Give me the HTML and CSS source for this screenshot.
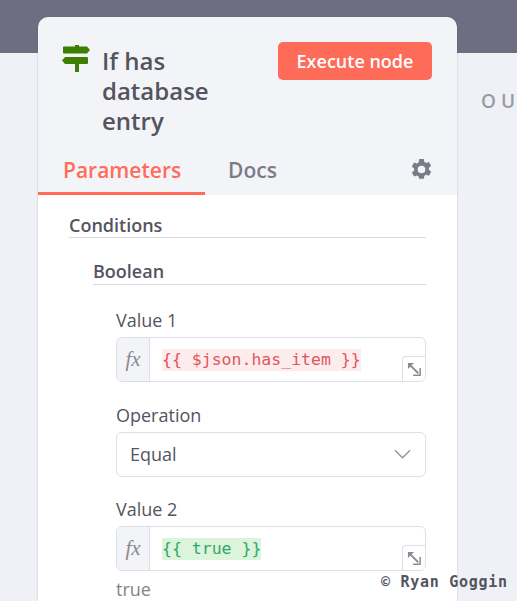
FILE: index.html
```html
<!DOCTYPE html>
<html lang="en">
<head>
<meta charset="utf-8">
<title>If has database entry</title>
<link rel="stylesheet" href="styles.css">
</head>
<body>
<div class="topbar"></div>
<div class="output-label">OU</div>
<section class="panel">
  <header class="head">
    <div class="title-group">
      <svg class="node-icon" viewBox="0 0 28 28" aria-hidden="true">
        <path fill="#3d7f00" d="M13 0h4v1.500h7.500a1 1 0 0 1 .7.3L28 5l-2.800 3.200a1 1 0 0 1-.7.300H2a1 1 0 0 1-1-1v-5a1 1 0 0 1 1-1h11zM3.500 12H25a1 1 0 0 1 1 1v5a1 1 0 0 1-1 1h-8v8h-4v-8H3.500a1 1 0 0 1-.7-.3L0 15.500l2.800-3.200a1 1 0 0 1 .7-.3z"/>
      </svg>
      <h1 class="title">If has database entry</h1>
    </div>
    <button class="execute">Execute node</button>
  </header>
  <nav class="tabs">
    <div class="tab tab-active">Parameters</div>
    <div class="tab tab-docs">Docs</div>
    <svg class="gear" viewBox="0 0 24 24" aria-hidden="true">
      <path fill="#7b7b88" fill-rule="evenodd" d="M9.600 1h4.800l.6 3.100 1.700 1 3-1 2.400 4.100-2.400 2.100v2l2.400 2.100-2.400 4.100-3-1-1.700 1-.6 3.100H9.600L9 19.200l-1.700-1-3 1-2.400-4.100 2.400-2.100v-2L1.900 8.900l2.400-4.100 3 1 1.700-1zM12 8a4 4 0 1 0 0 8 4 4 0 0 0 0-8z"/>
    </svg>
  </nav>
  <div class="body">
    <div class="section-title">Conditions</div>
    <div class="sub-section">
      <div class="section-title section-title-sub">Boolean</div>
      <div class="fields">
        <div class="field">
          <div class="label">Value 1</div>
          <div class="expr">
            <div class="fx">fx</div>
            <div class="expr-value"><span class="code code-red">{{ $json.has_item }}</span></div>
            <div class="expand">
              <svg viewBox="0 0 16 16" aria-hidden="true"><path fill="#8a8a94" d="M1 1h6.500L1 7.500z"/><path fill="none" stroke="#8a8a94" stroke-width="2" d="M3 3l9 9"/><path fill="none" stroke="#8a8a94" stroke-width="1.600" d="M14 6.500V14H6.500"/></svg>
            </div>
          </div>
        </div>
        <div class="field">
          <div class="label">Operation</div>
          <div class="select">
            <span>Equal</span>
            <svg class="chev" viewBox="0 0 18 10" aria-hidden="true"><path fill="none" stroke="#8f8f9a" stroke-width="1.300" d="M1 1l8 8 8-8"/></svg>
          </div>
        </div>
        <div class="field">
          <div class="label">Value 2</div>
          <div class="expr">
            <div class="fx">fx</div>
            <div class="expr-value"><span class="code code-green">{{ true }}</span></div>
            <div class="expand">
              <svg viewBox="0 0 16 16" aria-hidden="true"><path fill="#8a8a94" d="M1 1h6.500L1 7.500z"/><path fill="none" stroke="#8a8a94" stroke-width="2" d="M3 3l9 9"/><path fill="none" stroke="#8a8a94" stroke-width="1.600" d="M14 6.500V14H6.500"/></svg>
            </div>
          </div>
          <div class="hint">true</div>
        </div>
      </div>
    </div>
  </div>
</section>
<div class="watermark">© Ryan Goggin</div>
</body>
</html>
```

FILE: styles.css
```css
* { box-sizing: border-box; }
html, body { margin: 0; height: 100%; overflow: hidden; }
body {
  background: #eff1f7;
  font-family: "Open Sans", sans-serif;
  color: #54545f;
  position: relative;
}
.topbar { height: 53px; background: #6f6d80; }
.output-label {
  position: absolute;
  left: 481px;
  top: 89px;
  font-size: 19px;
  line-height: 24px;
  font-weight: 600;
  letter-spacing: 5px;
  color: #9a9aa4;
  white-space: nowrap;
}
.panel {
  position: absolute;
  left: 38px;
  top: 17px;
  width: 419px;
  height: 584px;
  background: #f3f4f8;
  border-radius: 10px 10px 0 0;
  box-shadow: 0 0 2px rgba(80, 80, 110, .35);
  overflow: hidden;
}
.head {
  display: flex;
  justify-content: space-between;
  align-items: flex-start;
  padding: 25px 25px 0 24px;
  height: 137px;
}
.title-group { display: flex; align-items: flex-start; }
.node-icon { width: 28px; height: 28px; margin-top: 3px; }
.title {
  margin: 4px 0 0 12px;
  width: 125px;
  font-size: 24px;
  line-height: 30px;
  font-weight: 600;
  color: #54545f;
}
.execute {
  width: 154px;
  height: 38px;
  padding: 0;
  border: 0;
  border-radius: 5px;
  background: #ff6b59;
  color: #fff;
  font-family: inherit;
  font-size: 18px;
  font-weight: 600;
}
.tabs {
  display: flex;
  align-items: flex-start;
  height: 41px;
  position: relative;
}
.tab {
  height: 41px;
  padding: 0 24px 0 25px;
  font-size: 21px;
  line-height: 33px;
  font-weight: 600;
  color: #7b7b88;
}
.tab-docs { padding-left: 23px; }
.tab-active {
  color: #ff6d5a;
  width: 167px;
  border-bottom: 3px solid #ff6d5a;
}
.gear { position: absolute; left: 372px; top: 4px; width: 23px; height: 23px; }
.body {
  background: #fff;
  height: 406px;
  padding: 19px 31px 0 31px;
}
.section-title {
  height: 24px;
  font-size: 18px;
  line-height: 22px;
  font-weight: 600;
  color: #54545f;
  border-bottom: 1px solid #d9dbe2;
}
.section-title-sub { height: 25px; }
.sub-section { padding: 22px 0 0 24px; }
.fields { padding: 23px 0 0 23px; }
.field { margin-bottom: 20.500px; }
.label {
  height: 29px;
  font-size: 18px;
  line-height: 24px;
  color: #54545f;
}
.expr {
  position: relative;
  display: flex;
  height: 45px;
  background: #fff;
  border: 1px solid #dcdfe6;
  border-radius: 6px;
  overflow: hidden;
}
.fx {
  width: 33px;
  background: #f3f4f8;
  border-right: 1px solid #dcdfe6;
  text-align: center;
  font-family: "Liberation Serif", serif;
  font-style: italic;
  font-size: 21px;
  line-height: 42px;
  color: #8a8a94;
}
.expr-value { padding: 10px 0 0 12px; }
.code {
  display: inline-block;
  font-family: "DejaVu Sans Mono", monospace;
  font-size: 16.500px;
  line-height: 22px;
}
.code-red { color: #e25563; background: #fdecec; }
.code-green { color: #2fa869; background: #dcf3dc; }
.expand {
  position: absolute;
  right: 0;
  bottom: 0;
  width: 23px;
  height: 25px;
  background: #fff;
  border-left: 1px solid #dcdfe6;
  border-top: 1px solid #dcdfe6;
  border-top-left-radius: 4px;
  display: flex;
  align-items: center;
  justify-content: center;
}
.expand svg { width: 15px; height: 15px; }
.select {
  display: flex;
  align-items: center;
  justify-content: space-between;
  height: 45px;
  padding: 0 14px 0 13px;
  background: #fff;
  border: 1px solid #dcdfe6;
  border-radius: 6px;
  font-size: 18px;
  color: #54545f;
}
.chev { width: 17px; height: 10px; }
.hint {
  margin-top: 6px;
  font-size: 18px;
  line-height: 24px;
  color: #84848e;
}
.watermark {
  position: absolute;
  left: 381px;
  top: 572px;
  font-family: "DejaVu Sans Mono", monospace;
  font-weight: 700;
  font-size: 15px;
  line-height: 20px;
  letter-spacing: 0.720px;
  color: #54545f;
  white-space: nowrap;
}
```
